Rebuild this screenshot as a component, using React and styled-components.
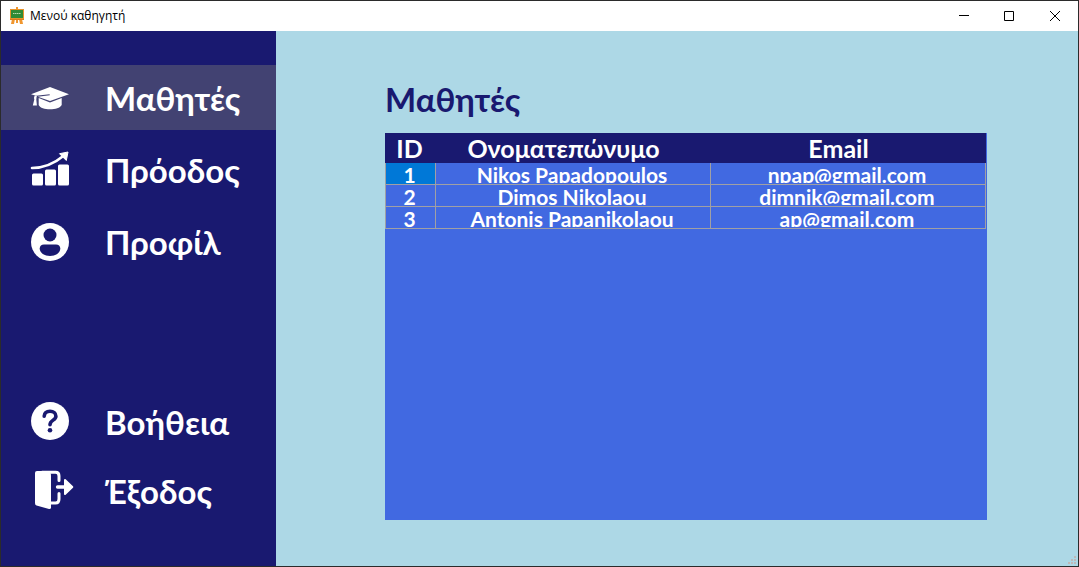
import React from "react";
import styled, { createGlobalStyle } from "styled-components";

const navy = "#191970";
const sky = "#add8e6";
const royal = "#4169e1";
const display = `"Century Gothic", Lato, "Noto Sans", sans-serif`;

const GlobalStyle = createGlobalStyle`
  *, *::before, *::after { box-sizing: border-box; }
  body { margin: 0; }
  button { font: inherit; color: inherit; background: none; border: 0; padding: 0; }
`;

const Window = styled.div`
  display: flex;
  flex-direction: column;
  min-height: 100vh;
  border: 1px solid #2b2b2b;
  background: ${sky};
`;

const TitleBar = styled.header`
  display: flex;
  align-items: center;
  height: 30px;
  padding-left: 8px;
  background: #fff;
  color: #000;
`;

const WindowTitle = styled.span`
  flex: 1;
  margin-left: 5px;
  font: 12px/16px "Segoe UI", "Open Sans", sans-serif;
`;

const WindowButton = styled.button`
  display: grid;
  place-items: center;
  width: 46px;
  height: 30px;
`;

const Body = styled.div`
  display: flex;
  flex: 1;
`;

const Sidebar = styled.nav`
  display: flex;
  flex-direction: column;
  justify-content: space-between;
  flex: 0 0 275px;
  padding: 34px 0 43px;
  background: ${navy};
`;

const NavGroup = styled.div`
  display: flex;
  flex-direction: column;
  gap: ${(p) => p.$gap};
`;

const NavButton = styled.button`
  display: flex;
  align-items: center;
  gap: 35px;
  height: 65px;
  padding-left: 29px;
  background: ${(p) => (p.$active ? "#424272" : "transparent")};
  color: #fff;
  font: bold ${"33px"}/40px ${display};
  text-align: left;

  svg { flex: none; overflow: visible; }
`;

const Main = styled.main`
  position: relative;
  display: flex;
  flex-direction: column;
  flex: 1;
  padding: 48px 91px 46px 109px;
`;

const Heading = styled.h1`
  margin: 0 0 14px;
  color: ${navy};
  font: bold 33px/40px ${display};
`;

const TablePanel = styled.section`
  flex: 1;
  padding-right: 1px;
  background: ${royal};
`;

const Table = styled.table`
  width: 100%;
  table-layout: fixed;
  border-collapse: separate;
  border-spacing: 0;
  color: #fff;
  font-family: ${display};
  text-align: center;
`;

const Col = styled.col`
  width: ${(p) => p.$width};
`;

const HeadCell = styled.th`
  height: 30px;
  padding: 0 20px 0 0;
  background: ${navy};
  font-size: 25px;
  line-height: 30px;

  &:first-child { padding-right: 2px; }
`;

const Cell = styled.td`
  height: 22px;
  padding: 0 2px 1px 0;
  border: solid #a0a0a4;
  border-width: 0 1px 1px 0;
  background: ${(p) => (p.$selected ? "#0078d7" : "transparent")};
  font-size: 21px;
  font-weight: bold;

  &:first-child { border-left-width: 1px; }
`;

const Clip = styled.div`
  height: 20px;
  overflow: hidden;
  line-height: 24px;
  white-space: nowrap;
`;

const Grip = styled.svg`
  position: absolute;
  right: 2px;
  bottom: 2px;
`;

const AppIcon = () => (
  <svg width="16" height="18" viewBox="0 0 16 18" aria-hidden="true">
    <path d="M7 0h2v3H7zM3 12h3L5 17H2zM10 12h3L14 17h-3zM7 12h2v4H7z" fill="#f0962e" />
    <rect x="1" y="2" width="14" height="10" fill="#e8932a" />
    <rect x="2" y="3" width="12" height="8" fill="#2f8a35" />
    <path d="M4 6.500h8" stroke="#b9dcae" strokeDasharray="1.500 .5" />
    <path d="M1 12h14v1H1z" fill="#d97b1c" />
  </svg>
);

const CapIcon = () => (
  <svg width="40" height="40" viewBox="0 0 40 40" fill="#fff" aria-hidden="true">
    <path d="M20 9 39 16.200 20 23 7.800 18.700 19.800 17.200 19.600 16.300 6 17.700 1 16.200Z" />
    <path d="M8.700 20 20 24.600 31.700 20V27C30 30 25.500 31.200 20 31.200S10.300 30 8.700 27Z" />
    <path d="M5 17.600 7 18.300C6.200 19.500 6.600 20.500 6.300 21.500L6.900 27.500H2.800L4.300 21.500C3.700 20 4.100 18.500 5 17.600Z" />
  </svg>
);

const ProgressIcon = () => (
  <svg width="40" height="40" viewBox="0 1 40 40" fill="#fff" aria-hidden="true">
    <rect x="2" y="24.500" width="11" height="12" rx="1.500" />
    <rect x="15" y="20.500" width="11" height="16" rx="1.500" />
    <rect x="28" y="15.500" width="11" height="21" rx="1.500" />
    <path d="M2 19C15 19 25 14 34 6.500" fill="none" stroke="#fff" strokeWidth="2.600" strokeLinecap="round" />
    <path d="M29.500 4.700 38 3 36.300 11.500Z" stroke="#fff" strokeLinejoin="round" />
  </svg>
);

const ProfileIcon = () => (
  <svg width="40" height="40" viewBox="0 0 40 40" aria-hidden="true">
    <circle cx="20" cy="20" r="19" fill="#fff" />
    <circle cx="20" cy="13" r="6.500" fill={navy} />
    <path d="M14 22.500H26Q30 22.500 30.300 26.500C30.300 31 25.500 34 20 34S9.700 31 9.700 26.500Q10 22.500 14 22.500Z" fill={navy} />
  </svg>
);

const HelpIcon = () => (
  <svg width="40" height="40" viewBox="0 1 40 40" aria-hidden="true">
    <circle cx="20" cy="20" r="19" fill="#fff" />
    <path d="M14.200 15.200C14.500 11.500 16.800 10.300 20 10.300C23.500 10.300 25.900 12.300 25.900 15.200C25.900 19.300 20 19 20 23.700" fill="none" stroke={navy} strokeWidth="3.600" strokeLinecap="round" />
    <circle cx="20" cy="29.300" r="2.300" fill={navy} />
  </svg>
);

const ExitIcon = () => (
  <svg width="40" height="40" viewBox="0 1 40 40" aria-hidden="true">
    <path d="M7 1H19.500Q21 3.500 21 6V38Q20.500 39.300 19 39L6.500 35.500Q5 35 5 33V3Q5 1 7 1Z" fill="#fff" />
    <path d="M12 2.300H25.500Q29 2.300 29 6V10.500M21 33H25.500Q29 33 29 29V23.500" fill="none" stroke="#fff" strokeWidth="3" strokeLinecap="round" />
    <path d="M27.500 17H35" stroke="#fff" strokeWidth="3.400" strokeLinecap="round" />
    <path d="M35 10 42.300 17 35 24Z" fill="#fff" stroke="#fff" strokeWidth="2" strokeLinejoin="round" />
  </svg>
);

const students = [
  { id: 1, name: "Nikos Papadopoulos", email: "npap@gmail.com" },
  { id: 2, name: "Dimos Nikolaou", email: "dimnik@gmail.com" },
  { id: 3, name: "Antonis Papanikolaou", email: "ap@gmail.com" },
];

export default function App() {
  return (
    <Window>
      <GlobalStyle />
      <TitleBar>
        <AppIcon />
        <WindowTitle>Μενού καθηγητή</WindowTitle>
        <WindowButton aria-label="Ελαχιστοποίηση">
          <svg width="11" height="11" stroke="#000"><path d="M1 4.500h10" /></svg>
        </WindowButton>
        <WindowButton aria-label="Μεγιστοποίηση">
          <svg width="11" height="11" stroke="#000" fill="none"><path d="M.5.500h9v9H.5z" /></svg>
        </WindowButton>
        <WindowButton aria-label="Κλείσιμο">
          <svg width="11" height="11" stroke="#000"><path d="M0 0l10 10M10 0l-10 10" /></svg>
        </WindowButton>
      </TitleBar>
      <Body>
        <Sidebar>
          <NavGroup $gap="7px">
            <NavButton $active><CapIcon />Μαθητές</NavButton>
            <NavButton><ProgressIcon />Πρόοδος</NavButton>
            <NavButton><ProfileIcon />Προφίλ</NavButton>
          </NavGroup>
          <NavGroup $gap="4px">
            <NavButton><HelpIcon />Βοήθεια</NavButton>
            <NavButton><ExitIcon />Έξοδος</NavButton>
          </NavGroup>
        </Sidebar>
        <Main>
          <Heading>Μαθητές</Heading>
          <TablePanel>
            <Table>
              <colgroup>
                <Col $width="51px" />
                <Col $width="auto" />
                <Col $width="auto" />
              </colgroup>
              <thead>
                <tr>
                  <HeadCell>ID</HeadCell>
                  <HeadCell>Ονοματεπώνυμο</HeadCell>
                  <HeadCell>Email</HeadCell>
                </tr>
              </thead>
              <tbody>
                {students.map((s) => (
                  <tr key={s.id}>
                    <Cell $selected={s.id === 1}><Clip>{s.id}</Clip></Cell>
                    <Cell><Clip>{s.name}</Clip></Cell>
                    <Cell><Clip>{s.email}</Clip></Cell>
                  </tr>
                ))}
              </tbody>
            </Table>
          </TablePanel>
          <Grip width="8" height="8" fill="#bfb8b8" aria-hidden="true">
            <path d="M6 0h2v2H6zM3 3h2v2H3zM6 3h2v2H6zM0 6h2v2H0zM3 6h2v2H3zM6 6h2v2H6z" />
          </Grip>
        </Main>
      </Body>
    </Window>
  );
}
